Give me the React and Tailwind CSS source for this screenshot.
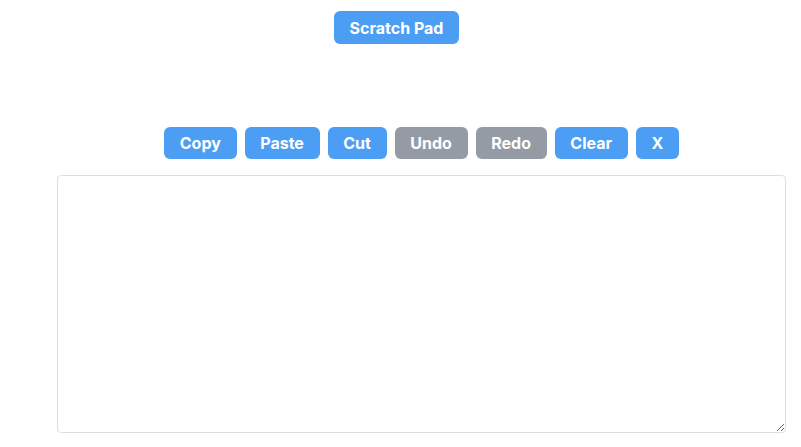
import { useState } from "react";

const buttons = [
  { label: "Copy", enabled: true },
  { label: "Paste", enabled: true },
  { label: "Cut", enabled: true },
  { label: "Undo", enabled: false },
  { label: "Redo", enabled: false },
  { label: "Clear", enabled: true },
  { label: "X", enabled: true },
];

export default function App() {
  const [text, setText] = useState("");

  return (
    <div className="min-h-screen bg-white font-['Inter','Liberation_Sans',sans-serif]">
      <div className="flex justify-center pt-[11px] pr-2">
        <button className="h-[33px] px-4 rounded-md bg-[#4c9ef4] text-white text-base font-bold leading-none">
          Scratch Pad
        </button>
      </div>

      <div className="flex flex-col items-center pl-[42px] pt-[83px]">
        <div className="flex gap-2">
          {buttons.map((b) => (
            <button
              key={b.label}
              className={
                "h-8 px-[15.7px] rounded-md text-white text-base font-bold leading-none " +
                (b.enabled ? "bg-[#4c9ef4]" : "bg-[#949ba5]")
              }
            >
              {b.label}
            </button>
          ))}
        </div>
        <textarea
          value={text}
          onChange={(e) => setText(e.target.value)}
          className="mt-4 w-[729px] h-[258px] border border-[#dedede] rounded-sm p-2 outline-none"
        />
      </div>
    </div>
  );
}
